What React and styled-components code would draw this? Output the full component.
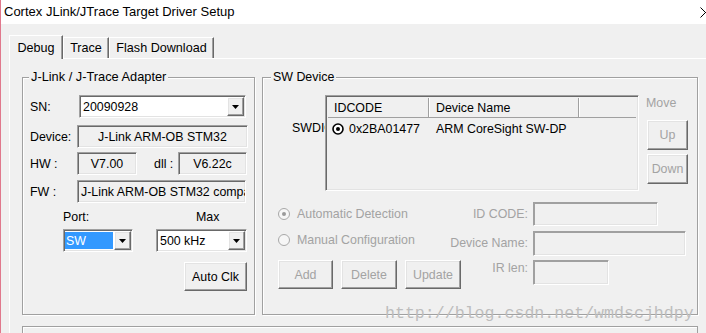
import React from 'react';
import styled, { createGlobalStyle, css } from 'styled-components';

const GlobalStyle = createGlobalStyle`
  * { box-sizing: border-box; }
  html, body { margin: 0; padding: 0; background: #f0f0f0; }
  body {
    font-family: "Liberation Sans", Arial, sans-serif;
    font-size: 12.4px;
    line-height: 14px;
    color: #000;
  }
`;

const sunken = css`
  border: 1px solid;
  border-color: #a0a0a0 #ffffff #ffffff #a0a0a0;
  box-shadow: inset 1px 1px 0 #696969, inset -1px -1px 0 #e3e3e3;
`;

const raised = css`
  border: 1px solid;
  border-color: #ffffff #696969 #696969 #ffffff;
  box-shadow: inset -1px -1px 0 #a0a0a0, inset 1px 1px 0 #e3e3e3;
`;

const Window = styled.div`
  position: relative;
  width: 706px;
  height: 333px;
  overflow: hidden;
  background: #f0f0f0;
  border-left: 1px solid #e0788c;
  display: flex;
  flex-direction: column;
`;

const TitleBar = styled.div`
  position: relative;
  flex: none;
  height: 24px;
  padding-left: 3px;
  background: #fff;
  display: flex;
  align-items: center;
  font-size: 13px;
`;

const CloseGlyph = styled.svg`
  position: absolute;
  left: 699px;
  top: 7px;
`;

const Body = styled.div`
  flex: 1;
  padding: 11px 0 0 8px;
  display: flex;
  flex-direction: column;
`;

const TabStrip = styled.div`
  position: relative;
  z-index: 1;
  height: 23px;
  display: flex;
  align-items: flex-end;
`;

const Tab = styled.div`
  width: ${(p) => p.$w}px;
  height: ${(p) => (p.$active ? 24 : 21)}px;
  margin-bottom: ${(p) => (p.$active ? -1 : 0)}px;
  align-self: ${(p) => (p.$active ? 'flex-start' : 'flex-end')};
  background: #f0f0f0;
  border-top: 1px solid #fff;
  border-left: 1px solid #fff;
  border-right: 1px solid #696969;
  box-shadow: inset -1px 0 0 #a0a0a0;
  display: flex;
  align-items: center;
  justify-content: center;
  font-size: 12.6px;
  white-space: nowrap;
`;

const TabPanel = styled.div`
  flex: 1;
  border-top: 1px solid #fff;
  border-left: 1px solid #fff;
  padding: 18px 0 0 12px;
  display: flex;
  flex-direction: column;
`;

const GroupsRow = styled.div`
  display: flex;
  gap: 7px;
  height: 238px;
  flex: none;
`;

const Group = styled.div`
  position: relative;
  width: ${(p) => p.$w}px;
  border: 1px solid #a0a0a0;
  box-shadow: inset 1px 1px 0 #fff, 1px 1px 0 #fff;
  display: flex;
  flex-direction: column;
  padding: 17px 0 0 ${(p) => p.$pl}px;
`;

const Legend = styled.span`
  position: absolute;
  top: -8px;
  left: ${(p) => p.$x}px;
  padding: 0 2px;
  background: #f0f0f0;
  line-height: 14px;
  font-size: ${(p) => p.$size || 12.4}px;
  white-space: nowrap;
`;

const Row = styled.div`
  display: flex;
  align-items: center;
  flex: none;
  height: ${(p) => p.$h || 23}px;
  margin-top: ${(p) => p.$mt || 0}px;
  margin-left: ${(p) => p.$ml || 0}px;
`;

const FieldLabel = styled.span`
  flex: none;
  width: ${(p) => p.$w}px;
  margin-left: ${(p) => p.$ml || 0}px;
  white-space: nowrap;
`;

const Combo = styled.div`
  ${sunken};
  flex: none;
  width: ${(p) => p.$w}px;
  height: 23px;
  padding: 1px;
  background: #fff;
  display: flex;
  align-items: stretch;
`;

const ComboText = styled.span`
  flex: 1;
  display: flex;
  align-items: center;
  padding-left: 2px;
  white-space: nowrap;
  ${(p) =>
    p.$selected &&
    css`
      margin: 1px 1px 1px 0;
      padding-left: 1px;
      background: #3399ff;
      color: #fff;
    `}
`;

const DropButton = styled.span`
  ${raised};
  flex: none;
  width: 17px;
  background: #f0f0f0;
  display: flex;
  align-items: center;
  justify-content: center;
`;

const ReadBox = styled.div`
  ${sunken};
  flex: none;
  width: ${(p) => p.$w}px;
  height: 23px;
  padding: 0 3px;
  display: flex;
  align-items: center;
  justify-content: ${(p) => (p.$left ? 'flex-start' : 'center')};
  overflow: hidden;
  white-space: nowrap;
`;

const PortGrid = styled.div`
  display: grid;
  grid-template-columns: 70px 91px;
  grid-template-rows: 14px 23px;
  column-gap: 23px;
  row-gap: 5px;
  margin: 7px 0 0 33px;
`;

const GridLabel = styled.span`
  padding-left: ${(p) => p.$pl || 0}px;
  white-space: nowrap;
`;

const Button = styled.button`
  ${raised};
  flex: none;
  width: ${(p) => p.$w}px;
  height: ${(p) => p.$h || 29}px;
  margin-top: ${(p) => p.$mt || 0}px;
  margin-left: ${(p) => p.$ml || 0}px;
  padding: 0;
  background: #f0f0f0;
  font-family: inherit;
  font-size: 12.4px;
  color: ${(p) => (p.disabled ? '#a3a3a3' : '#000')};
`;

const DeviceTop = styled.div`
  display: flex;
  align-items: flex-start;
  height: 96px;
  flex: none;
`;

const SideLabel = styled.span`
  flex: none;
  width: 33px;
  margin: 26px 0 0 29px;
  overflow: hidden;
  white-space: nowrap;
`;

const ListView = styled.div`
  ${sunken};
  flex: none;
  width: 314px;
  height: 96px;
  padding: 2px;
  display: flex;
  flex-direction: column;
`;

const ListHeader = styled.div`
  display: flex;
  height: 20px;
  border-bottom: 1px solid #a0a0a0;
`;

const HeaderCell = styled.div`
  flex: ${(p) => (p.$w ? 'none' : 1)};
  width: ${(p) => p.$w}px;
  padding-left: ${(p) => p.$pl || 0}px;
  border-right: ${(p) => (p.$w ? '1px solid #a0a0a0' : 'none')};
  box-shadow: ${(p) => (p.$w ? '1px 0 0 #fff' : 'none')};
  display: flex;
  align-items: center;
`;

const ListRow = styled.div`
  display: flex;
  height: 22px;
  align-items: center;
`;

const Cell = styled.div`
  flex: none;
  width: ${(p) => p.$w}px;
  padding-left: ${(p) => p.$pl || 0}px;
  display: flex;
  align-items: center;
  gap: 5px;
  white-space: nowrap;
`;

const MoveColumn = styled.div`
  display: flex;
  flex-direction: column;
  margin-left: 7px;
`;

const MutedText = styled.span`
  color: #a3a3a3;
  white-space: nowrap;
  margin-top: ${(p) => p.$mt || 0}px;
`;

const FormArea = styled.div`
  display: flex;
  flex-direction: column;
  margin-top: 10px;
  padding-left: 15px;
`;

const FormRow = styled.div`
  display: flex;
  align-items: center;
  height: ${(p) => p.$h}px;
  margin-top: ${(p) => p.$mt || 0}px;
`;

const RadioItem = styled.label`
  display: flex;
  align-items: center;
  gap: 7px;
  height: 20px;
  align-self: flex-start;
  margin-top: ${(p) => p.$mt || 0}px;
  color: #a3a3a3;
  white-space: nowrap;
`;

const ButtonGroup = styled.div`
  display: flex;
  gap: 8px;
  align-self: flex-start;
`;

const FormLabel = styled.span`
  flex: 1;
  text-align: right;
  padding-right: 5px;
  color: #a3a3a3;
  white-space: nowrap;
  align-self: ${(p) => (p.$top ? 'flex-start' : 'center')};
  margin-top: ${(p) => (p.$top ? 1 : 0)}px;
`;

const InputSlot = styled.div`
  flex: none;
  width: 164px;
  display: flex;
  align-self: ${(p) => (p.$top ? 'flex-start' : 'center')};
`;

const DisabledInput = styled.div`
  ${sunken};
  width: ${(p) => p.$w}px;
  height: ${(p) => p.$h}px;
  background: #f0f0f0;
  box-shadow: inset 1px 1px 0 #a0a0a0, inset -1px -1px 0 #e3e3e3;
`;

const BottomBox = styled.div`
  flex: none;
  width: 676px;
  height: 30px;
  margin-top: 11px;
  border: 1px solid #a0a0a0;
  box-shadow: inset 1px 1px 0 #fff;
`;

const Watermark = styled.div`
  position: absolute;
  left: 384px;
  top: 304px;
  font-family: "Liberation Mono", "Courier New", monospace;
  font-size: 16.6px;
  line-height: 20px;
  color: #bdbdbd;
  white-space: nowrap;
  pointer-events: none;
`;

const Arrow = () => (
  <svg width="7" height="4" viewBox="0 0 7 4">
    <path d="M0 0h7L3.5 4z" fill="#000" />
  </svg>
);

const Radio = ({ checked }) => (
  <svg width="12" height="12" viewBox="0 0 12 12">
    <circle cx="6" cy="6" r="5.5" fill="#f6f6f6" stroke="#a8a8a8" />
    {checked && <circle cx="6" cy="6" r="2" fill="#9a9a9a" />}
  </svg>
);

const ListRadio = () => (
  <svg width="12" height="12" viewBox="0 0 12 12">
    <circle cx="6" cy="6" r="5" fill="#fff" stroke="#000" strokeWidth="1.6" />
    <circle cx="6" cy="6" r="2" fill="#000" />
  </svg>
);

const ComboBox = ({ width, value, selected }) => (
  <Combo $w={width}>
    <ComboText $selected={selected}>{value}</ComboText>
    <DropButton>
      <Arrow />
    </DropButton>
  </Combo>
);

const AdapterGroup = () => (
  <Group $w={233} $pl={7}>
    <Legend $x={6} $size={12.8}>J-Link / J-Trace Adapter</Legend>
    <Row>
      <FieldLabel $w={49}>SN:</FieldLabel>
      <ComboBox width={167} value="20090928" />
    </Row>
    <Row $mt={7}>
      <FieldLabel $w={47}>Device:</FieldLabel>
      <ReadBox $w={171}>J-Link ARM-OB STM32</ReadBox>
    </Row>
    <Row $mt={4}>
      <FieldLabel $w={47}>HW :</FieldLabel>
      <ReadBox $w={60}>V7.00</ReadBox>
      <FieldLabel $w={24} $ml={17}>dll :</FieldLabel>
      <ReadBox $w={69}>V6.22c</ReadBox>
    </Row>
    <Row $mt={5}>
      <FieldLabel $w={47}>FW :</FieldLabel>
      <ReadBox $w={169} $left>J-Link ARM-OB STM32 compatible</ReadBox>
    </Row>
    <PortGrid>
      <GridLabel>Port:</GridLabel>
      <GridLabel $pl={40}>Max</GridLabel>
      <ComboBox width={70} value="SW" selected />
      <ComboBox width={91} value="500 kHz" />
    </PortGrid>
    <Button $w={63} $mt={10} $ml={154}>Auto Clk</Button>
  </Group>
);

const SwDeviceGroup = () => (
  <Group $w={436} $pl={0}>
    <Legend $x={8}>SW Device</Legend>
    <DeviceTop>
      <SideLabel>SWDIO</SideLabel>
      <ListView>
        <ListHeader>
          <HeaderCell $w={101} $pl={6}>IDCODE</HeaderCell>
          <HeaderCell $w={150} $pl={7}>Device Name</HeaderCell>
          <HeaderCell />
        </ListHeader>
        <ListRow>
          <Cell $w={101} $pl={4}>
            <ListRadio />
            0x2BA01477
          </Cell>
          <Cell $w={150} $pl={7}>ARM CoreSight SW-DP</Cell>
        </ListRow>
      </ListView>
      <MoveColumn>
        <MutedText $mt={1}>Move</MutedText>
        <Button disabled $w={41} $h={30} $mt={10} $ml={1}>Up</Button>
        <Button disabled $w={41} $h={30} $mt={4} $ml={1}>Down</Button>
      </MoveColumn>
    </DeviceTop>
    <FormArea>
      <FormRow $h={25}>
        <RadioItem $mt={3}>
          <Radio checked />
          Automatic Detection
        </RadioItem>
        <FormLabel>ID CODE:</FormLabel>
        <InputSlot>
          <DisabledInput $w={125} $h={24} />
        </InputSlot>
      </FormRow>
      <FormRow $h={26} $mt={4}>
        <RadioItem>
          <Radio />
          Manual Configuration
        </RadioItem>
        <FormLabel>Device Name:</FormLabel>
        <InputSlot>
          <DisabledInput $w={153} $h={25} />
        </InputSlot>
      </FormRow>
      <FormRow $h={29} $mt={4}>
        <ButtonGroup>
          <Button disabled $w={55}>Add</Button>
          <Button disabled $w={56}>Delete</Button>
          <Button disabled $w={56}>Update</Button>
        </ButtonGroup>
        <FormLabel $top>IR len:</FormLabel>
        <InputSlot $top>
          <DisabledInput $w={76} $h={25} />
        </InputSlot>
      </FormRow>
    </FormArea>
  </Group>
);

export default function App() {
  return (
    <>
      <GlobalStyle />
      <Window>
        <TitleBar>
          Cortex JLink/JTrace Target Driver Setup
          <CloseGlyph width="11" height="11" viewBox="0 0 11 11">
            <path d="M0.5 0.5L10.5 10.5M10.5 0.5L0.5 10.5" stroke="#000" strokeWidth="1" />
          </CloseGlyph>
        </TitleBar>
        <Body>
          <TabStrip>
            <Tab $w={54} $active>Debug</Tab>
            <Tab $w={46}>Trace</Tab>
            <Tab $w={105}>Flash Download</Tab>
          </TabStrip>
          <TabPanel>
            <GroupsRow>
              <AdapterGroup />
              <SwDeviceGroup />
            </GroupsRow>
            <BottomBox />
          </TabPanel>
        </Body>
        <Watermark>http://blog.csdn.net/wmdscjhdpy</Watermark>
      </Window>
    </>
  );
}
